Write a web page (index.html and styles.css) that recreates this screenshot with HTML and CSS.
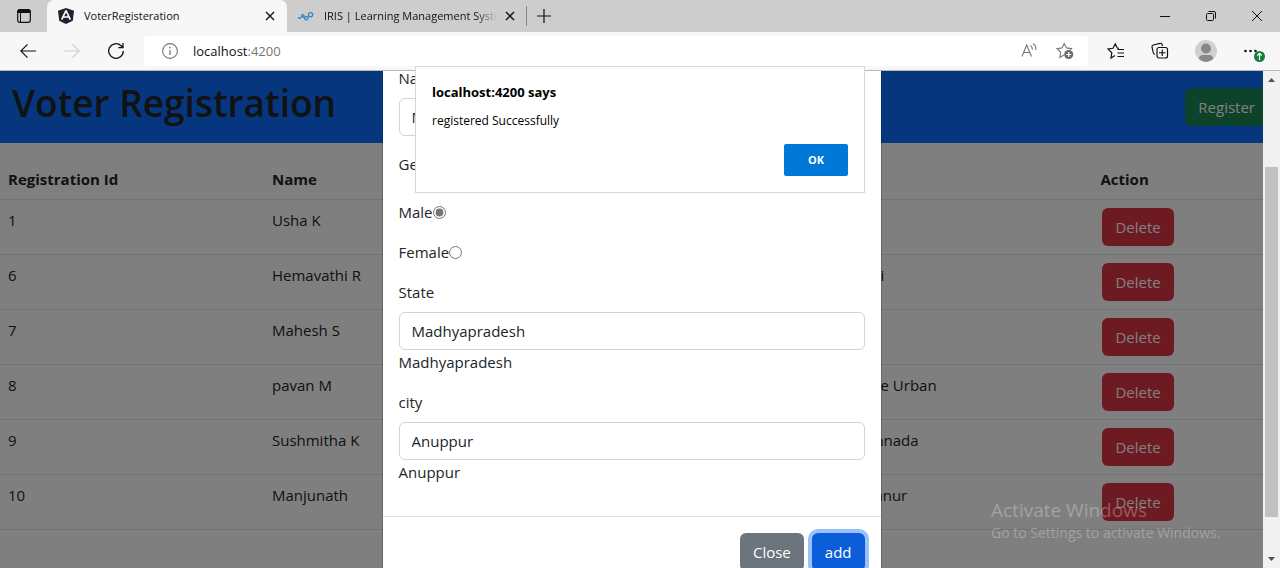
FILE: index.html
```html
<!DOCTYPE html>
<html lang="en">
<head>
<meta charset="utf-8">
<title>VoterRegisteration</title>
<link rel="stylesheet" href="styles.css">
</head>
<body>
<header class="chrome">
  <div class="titlebar">
    <button class="tab-actions" aria-label="Tab actions">
      <svg width="16" height="16" viewBox="0 0 16 16"><rect x="1.7" y="1.7" width="12.6" height="12.6" rx="2" fill="none" stroke="#111" stroke-width="1.2"/><path d="M1.500 5V3q0-1.500 1.500-1.500h10q1.500 0 1.500 1.500v2z" fill="#111"/><path d="M4.500 5v9" stroke="#111"/></svg>
    </button>
    <div class="tab tab-active">
      <svg class="tab-icon" width="16" height="16" viewBox="0 0 16 16"><path d="M8 0l8 2.700-1.200 10L8 16l-6.800-3.300L0 2.700z" fill="#1d232e"/><path d="M8 2.500L3.700 11.700M8 2.500l4.300 9.200M5.700 9h4.600" stroke="#fff" stroke-width="1.700" fill="none"/></svg>
      <span class="tab-title">VoterRegisteration</span>
      <button class="icon-btn" aria-label="Close tab"><svg width="10" height="10" viewBox="0 0 10 10"><path d="M1 1l8 8M9 1L1 9" stroke="#111" stroke-width="1.400"/></svg></button>
    </div>
    <div class="tab tab-idle">
      <svg class="tab-icon" width="16" height="16" viewBox="0 0 16 16" fill="none" stroke="#2f86c5" stroke-width="1.300"><path d="M0 10h3M3.500 9l1-1M6 9l1 1M10 9l1-1"/><circle cx="4.800" cy="8" r="1.300"/><circle cx="8.300" cy="10.200" r="1.600"/><circle cx="12.500" cy="6.700" r="2.100"/></svg>
      <span class="tab-title tab-fade">IRIS | Learning Management System</span>
      <button class="icon-btn" aria-label="Close tab"><svg width="10" height="10" viewBox="0 0 10 10"><path d="M1 1l8 8M9 1L1 9" stroke="#111" stroke-width="1.400"/></svg></button>
    </div>
    <button class="new-tab" aria-label="New tab"><svg width="14" height="14" viewBox="0 0 14 14"><path d="M7 0v14M0 7h14" stroke="#111" stroke-width="1.200"/></svg></button>
    <div class="window-controls">
      <button class="icon-btn" aria-label="Minimize"><svg width="10" height="10" viewBox="0 0 10 10"><path d="M0 5.500h10" stroke="#111"/></svg></button>
      <button class="icon-btn" aria-label="Restore"><svg width="10" height="10" viewBox="0 0 10 10" fill="none" stroke="#111"><rect x=".5" y="2.500" width="7" height="7" rx="1"/><path d="M2.500.5H8q1.500 0 1.500 1.500v5.500"/></svg></button>
      <button class="icon-btn" aria-label="Close"><svg width="10" height="10" viewBox="0 0 10 10"><path d="M0 0l10 10M10 0L0 10" stroke="#111"/></svg></button>
    </div>
  </div>
  <div class="toolbar">
    <div class="nav-buttons">
      <button class="icon-btn" aria-label="Back"><svg width="16" height="16" viewBox="0 0 16 16" fill="none" stroke="#111" stroke-width="1.200"><path d="M16 8H.8M7.500 1.300L.8 8l6.700 6.700"/></svg></button>
      <button class="icon-btn" aria-label="Forward"><svg width="16" height="16" viewBox="0 0 16 16" fill="none" stroke="#ccc" stroke-width="1.100"><path d="M0 8h15.200M8.500 1.300L15.200 8l-6.700 6.700"/></svg></button>
      <button class="icon-btn" aria-label="Refresh"><svg width="16" height="18" viewBox="0 0 16 18" fill="none" stroke="#111" stroke-width="1.300"><path d="M15.300 9a7.300 7.300 0 1 1-2.200-5.200L15 5.700M15 1v4.700h-4.700"/></svg></button>
    </div>
    <div class="address">
      <svg width="16" height="16" viewBox="0 0 16 16"><circle cx="8" cy="8" r="7.400" fill="none" stroke="#777" stroke-width="1.100"/><path d="M8 7v5" stroke="#777" stroke-width="1.300"/><circle cx="8" cy="4.600" r=".9" fill="#777"/></svg>
      <span class="url">localhost<span class="port">:4200</span></span>
      <button class="icon-btn" aria-label="Read aloud"><svg width="17" height="16" viewBox="0 0 17 16" fill="none" stroke="#777" stroke-width="1.100"><path d="M1 13.500L5.700 2l4.800 11.500M2.500 9.500H9M9.500 2.500q2 1.500 1.900 4M12 .5q3.500 2.300 2.800 6.500"/></svg></button>
      <button class="icon-btn" aria-label="Add to favorites"><svg width="18" height="18" viewBox="0 0 18 18"><path d="M8 13L3.800 15.500l.9-5.200L1 6.600l5-.7L8.200 1.500l2.300 4.400 5 .7-1.500 1.500" fill="none" stroke="#777" stroke-width="1.100"/><circle cx="12.700" cy="12.500" r="4.500" fill="#6b6b6b"/><path d="M12.700 10v5M10.200 12.500h5" stroke="#fff" stroke-width="1.200"/></svg></button>
    </div>
    <div class="tools">
      <button class="icon-btn" aria-label="Favorites"><svg width="18" height="18" viewBox="0 0 18 18" fill="none" stroke="#111" stroke-width="1.200"><path d="M8 13.500L4 16l.8-5.300L1 7l5-.7 2.300-4.500 2 4.200 1.700.3M8 13.500M10.500 7.500H17M10.500 11H17M10.500 14.500H17"/></svg></button>
      <button class="icon-btn" aria-label="Collections"><svg width="18" height="18" viewBox="0 0 18 18" fill="none" stroke="#111" stroke-width="1.200"><path d="M4 12.500q-1.500-.5-1.800-2L1 5Q.8 3.500 2.300 3L9 1.300q1.500-.3 2 1l.5 1.700"/><rect x="6" y="5.500" width="10.500" height="10.500" rx="2"/><path d="M11.250 7.500v6.500M8 10.750h6.500"/></svg></button>
      <button class="icon-btn" aria-label="Profile"><svg width="22" height="22" viewBox="0 0 22 22"><circle cx="11" cy="11" r="11" fill="#d2d0ce"/><circle cx="11" cy="8.500" r="5" fill="#8a8886"/><path d="M4 19q0-4 4-4h6q4 0 4 4-7 6-14 0z" fill="#8a8886"/></svg></button>
      <button class="icon-btn" aria-label="Settings and more"><svg width="22" height="22" viewBox="0 0 22 22"><g fill="#111"><circle cx="2.500" cy="11" r="1.300"/><circle cx="7.500" cy="11" r="1.300"/><circle cx="12.500" cy="11" r="1.300"/></g><circle cx="16.500" cy="16.500" r="5.500" fill="#15803d"/><path d="M16.500 20v-6.500M14.300 15.500l2.200-2.200 2.200 2.200" fill="none" stroke="#fff" stroke-width="1.200"/></svg></button>
    </div>
  </div>
</header>

<div class="viewport">
  <main class="page">
    <nav class="navbar">
      <h1 class="brand">Voter Registration</h1>
      <button class="btn btn-success btn-register">Register</button>
    </nav>
    <table class="voters">
      <colgroup><col class="col-id"><col class="col-name"><col class="col-city"><col class="col-action"></colgroup>
      <thead><tr><th>Registration Id</th><th>Name</th><th></th><th>Action</th></tr></thead>
      <tbody>
        <tr><td>1</td><td>Usha K</td><td></td><td><button class="btn btn-danger">Delete</button></td></tr>
        <tr><td>6</td><td>Hemavathi R</td><td>ri</td><td><button class="btn btn-danger">Delete</button></td></tr>
        <tr><td>7</td><td>Mahesh S</td><td></td><td><button class="btn btn-danger">Delete</button></td></tr>
        <tr><td>8</td><td>pavan M</td><td>re Urban</td><td><button class="btn btn-danger">Delete</button></td></tr>
        <tr><td>9</td><td>Sushmitha K</td><td>nnada</td><td><button class="btn btn-danger">Delete</button></td></tr>
        <tr><td>10</td><td>Manjunath</td><td>anur</td><td><button class="btn btn-danger">Delete</button></td></tr>
      </tbody>
    </table>
    <div class="backdrop"></div>
    <form class="modal">
      <div class="modal-body">
        <div class="field">
          <label for="name">Name</label>
          <input class="control" id="name" type="text" value="Manjunath">
        </div>
        <fieldset class="choices">
          <legend>Gender</legend>
          <div class="choice"><label for="male">Male</label><input class="radio" id="male" type="radio" name="gender" checked></div>
          <div class="choice"><label for="female">Female</label><input class="radio" id="female" type="radio" name="gender"></div>
        </fieldset>
        <div class="field">
          <label for="state">State</label>
          <input class="control" id="state" type="text" value="Madhyapradesh">
          <span>Madhyapradesh</span>
        </div>
        <div class="field">
          <label for="city">city</label>
          <input class="control" id="city" type="text" value="Anuppur">
          <span>Anuppur</span>
        </div>
      </div>
      <div class="modal-footer">
        <button class="btn btn-secondary" type="button">Close</button>
        <button class="btn btn-primary" type="button">add</button>
      </div>
    </form>
  </main>
  <div class="scrollbar" aria-hidden="true">
    <svg width="17" height="17" viewBox="0 0 17 17"><path d="M5 11l3.500-4L12 11z" fill="#505050"/></svg>
    <div class="track-above"></div>
    <div class="thumb"></div>
    <div class="track-below"></div>
    <svg width="17" height="17" viewBox="0 0 17 17"><path d="M5 6l3.500 4L12 6z" fill="#505050"/></svg>
  </div>
</div>

<div class="alert" role="alertdialog" aria-labelledby="alert-title">
  <strong class="alert-title" id="alert-title">localhost:4200 says</strong>
  <p class="alert-text">registered Successfully</p>
  <button class="alert-ok">OK</button>
</div>

<div class="watermark">
  <div class="watermark-title">Activate Windows</div>
  <div class="watermark-text">Go to Settings to activate Windows.</div>
</div>
</body>
</html>
```
FILE: styles.css
```css
* { box-sizing: border-box; }

body {
  margin: 0;
  height: 100vh;
  display: flex;
  flex-direction: column;
  position: relative;
  overflow: hidden;
  font-family: "Open Sans", "Noto Sans", sans-serif;
  font-size: 15px;
  line-height: 24px;
  color: #212529;
}

button, input { font: inherit; color: inherit; }
svg { display: block; flex: none; }

.icon-btn, .tab-actions, .new-tab {
  border: 0;
  padding: 0;
  background: none;
  flex: none;
}

/* Browser chrome */
.chrome { flex: none; border-bottom: 1px solid #b8b8b8; background: #f7f7f7; }
.titlebar { display: flex; height: 32px; background: #cdcdcd; font-size: 11px; }
.tab-actions { width: 47px; padding-left: 16px; }
.tab { display: flex; align-items: center; width: 240px; padding: 0 12px 0 11px; }
.tab-active { background: #f7f7f7; border-radius: 7px 7px 0 0; }
.tab-icon { margin-right: 10px; }
.tab-title { flex: 1; min-width: 0; overflow: hidden; white-space: nowrap; color: #111; }
.tab-idle { border-right: 1px solid #888; height: 20px; margin-top: 6px; padding-right: 11px; }
.tab-idle .icon-btn { margin-left: 8px; }
.tab-fade { -webkit-mask-image: linear-gradient(90deg, #000 88%, transparent); mask-image: linear-gradient(90deg, #000 88%, transparent); }
.new-tab { padding: 0 10px; }
.window-controls { display: flex; align-items: center; gap: 36px; margin-left: auto; padding-right: 18px; }
.toolbar { display: flex; align-items: center; height: 38px; }
.nav-buttons { display: flex; align-items: center; gap: 28px; padding: 0 20px; }
.address {
  flex: 1;
  display: flex;
  align-items: center;
  height: 30px;
  padding: 0 14px 0 18px;
  border-radius: 4px;
  background: #fff;
  font-size: 13px;
}
.url { flex: 1; margin-left: 15px; color: #111; }
.port { color: #767676; }
.address .icon-btn + .icon-btn { margin-left: 18px; }
.tools { display: flex; align-items: center; gap: 26px; padding: 0 15px 0 19px; }

/* Page */
.viewport { flex: 1; min-height: 0; display: flex; }
.page { flex: 1; min-width: 0; position: relative; overflow: hidden; background: #fff; }
.navbar {
  display: flex;
  align-items: flex-start;
  justify-content: space-between;
  padding: 8px 12px 16px;
  background: #0d6efd;
}
.brand { margin: 0; font-size: 37px; font-weight: 600; line-height: 48px; }
.btn {
  padding: 6px 12px;
  border: 1px solid transparent;
  border-radius: 6px;
  color: #fff;
}
.btn-success { background: #198754; }
.btn-danger { background: #dc3545; margin-left: 2px; }
.btn-secondary { background: #6c757d; }
.btn-primary { background: #0b5ed7; box-shadow: 0 0 0 4px #98c1fe; }
.btn-register { margin: 9px -17px 0 0; }

.voters { width: 100%; margin-top: 16px; border-collapse: collapse; table-layout: fixed; }
.voters th, .voters td {
  padding: 8px;
  border-bottom: 1px solid #dee2e6;
  text-align: left;
  vertical-align: top;
}
.voters td .btn { display: block; }
.col-id { width: 20.9%; }
.col-name { width: 47.7%; }
.col-city { width: 17.9%; }

.backdrop { position: absolute; inset: 0; background: rgba(0, 0, 0, .5); }

/* Modal, scrolled so that its header is above the view */
.modal {
  position: absolute;
  top: -22px;
  left: 0;
  right: 0;
  max-width: 500px;
  margin: 0 auto;
  border: 1px solid rgba(0, 0, 0, .18);
  background: #fff;
  background-clip: padding-box;
}
.modal-body { padding: 16px; }
.field { display: flex; flex-direction: column; margin-bottom: 16px; }
.field label { margin-bottom: 8px; }
.control {
  width: 100%;
  padding: 6px 12px;
  border: 1px solid #ced4da;
  border-radius: 6px;
  background: #fff;
}
.choices { margin: 0; padding: 0; border: 0; }
.choices legend { padding: 0; margin-bottom: 24px; }
.choice { display: flex; align-items: center; margin-bottom: 16px; }
.radio { width: 13px; height: 13px; margin: 0; accent-color: #767676; }
.modal-footer {
  display: flex;
  justify-content: flex-end;
  gap: 8px;
  padding: 16px;
  border-top: 1px solid #dee2e6;
}

.scrollbar { flex: none; width: 17px; display: flex; flex-direction: column; background: #f1f1f1; }
.track-above { flex: 79; }
.thumb { flex: 350; margin: 0 2px; background: #c1c1c1; }
.track-below { flex: 34; }

/* Browser alert */
.alert {
  position: absolute;
  top: 66px;
  left: 0;
  right: 0;
  width: 450px;
  margin: 0 auto;
  padding: 13px 16px 16px;
  display: flex;
  flex-direction: column;
  border: 1px solid #d6d6d6;
  background: #fff;
  color: #000;
  font-size: 12px;
}
.alert-title { font-size: 13px; }
.alert-text { margin: 5px 0 11px; }
.alert-ok {
  align-self: flex-end;
  width: 64px;
  height: 32px;
  padding: 0;
  border: 0;
  border-radius: 2px;
  background: #0078d7;
  color: #fff;
  font-size: 11px;
  font-weight: 700;
}

.watermark {
  position: absolute;
  right: 53px;
  bottom: 24px;
  width: 236px;
  color: rgba(255, 255, 255, .28);
  font-size: 14px;
  line-height: 22px;
  white-space: nowrap;
  pointer-events: none;
}
.watermark-title { font-size: 19px; line-height: 24px; }
```
